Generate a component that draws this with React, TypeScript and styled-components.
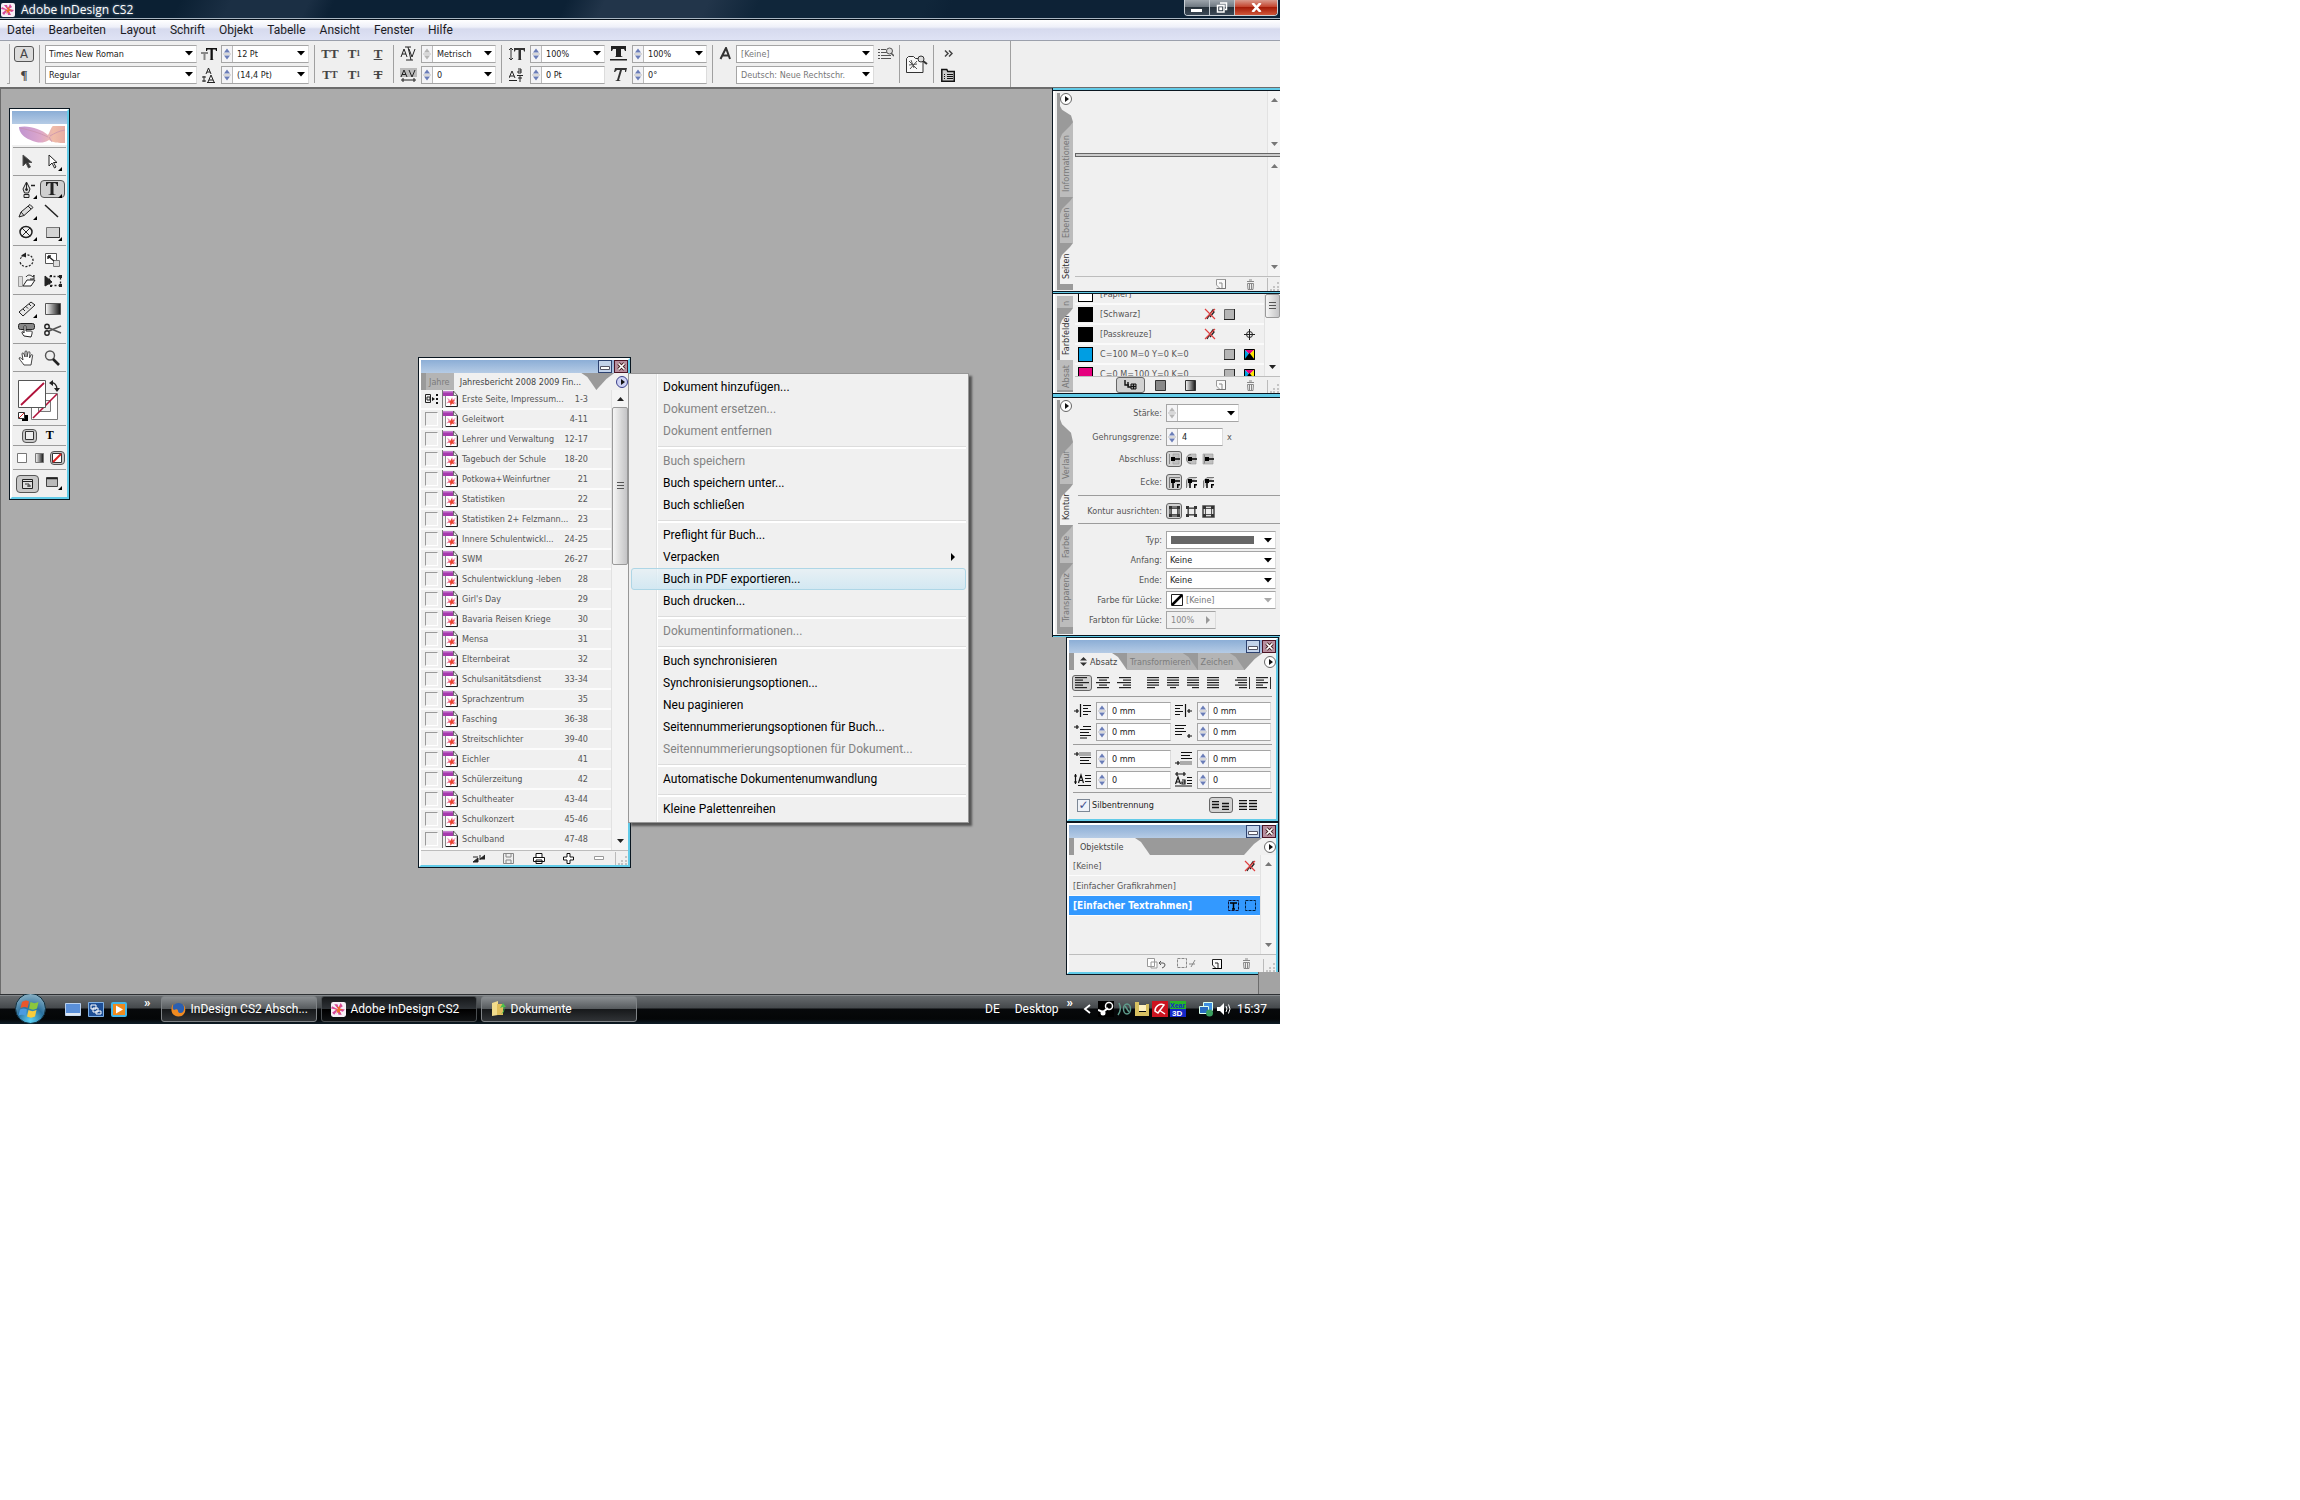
import React from 'react';
import styled, { createGlobalStyle, css } from 'styled-components';

const ui = 'Roboto, "Open Sans", sans-serif';
const small = '"DejaVu Sans Condensed", "DejaVu Sans", sans-serif';
const serif = '"Liberation Serif", serif';
const face = '#f0f0f0';
const cyan = '#62cbe8';
const rule = '#9c9c9c';

const Global = createGlobalStyle`
  * { box-sizing: border-box; }
  body { margin: 0; background: #fff; font-family: ${ui}; font-size: 12px; color: #000; }
  button, input, select { font: inherit; color: inherit; margin: 0; padding: 0; border: 0; background: none; border-radius: 0; outline: none; }
  button { display: flex; align-items: center; justify-content: center; }
  svg { display: block; flex: none; }
  ul { list-style: none; margin: 0; padding: 0; }
`;

/* ---------- shell ---------- */
const Desktop = styled.div`
  max-width: 1280px;
  display: flex;
  flex-direction: column;
  overflow: hidden;
`;

const TitleBar = styled.header`
  height: 20px;
  display: flex;
  align-items: center;
  gap: 6px;
  padding-left: 1px;
  color: #fff;
  border-bottom: 1px solid #06101a;
  box-shadow: inset 0 -1px 0 #a9b6c2;
  background: linear-gradient(115deg, #0b2033 0 14%, #1b2f44 18% 24%, #0c2135 26% 44%, #22354a 47% 55%, #10263a 59% 72%, #0d2236 74% 100%);
`;
const AppTitle = styled.h1`
  margin: 0;
  flex: 1;
  font-family: "Open Sans", sans-serif;
  font-size: 12px;
  font-weight: 400;
  line-height: 18px;
  text-shadow: 0 0 3px #7d93a8;
`;
const Caption = styled.div`
  display: flex;
  align-self: flex-start;
  height: 16px;
  margin-right: 2px;
  border: 1px solid #c9d0d6;
  border-top: 0;
  border-radius: 0 0 4px 4px;
  overflow: hidden;
`;
const CaptionButton = styled.button<{ $close?: boolean }>`
  width: ${p => (p.$close ? 42 : 25)}px;
  border-right: ${p => (p.$close ? 0 : '1px solid #c0c8ce')};
  background: ${p => (p.$close
    ? 'linear-gradient(#d99a8c, #c4452f 45%, #a51c08 50%, #d0573a)'
    : 'linear-gradient(#9da5ac, #6f7982 45%, #27323c 50%, #3c4956)')};
`;

const MenuBar = styled.nav`
  height: 21px;
  display: flex;
  align-items: center;
  gap: 14px;
  padding-left: 7px;
  border-bottom: 1px solid #9ba0ac;
  background: linear-gradient(#ffffff, #eef0f9 35%, #d6daee 45%, #dfe3f5);
`;
const MenuLink = styled.button`
  line-height: 18px;
  color: #1c1c24;
`;

/* ---------- control strip ---------- */
const ControlBar = styled.section`
  height: 48px;
  display: flex;
  align-items: center;
  gap: 4px;
  padding-left: 7px;
  background: #efefef;
  border-bottom: 2px solid #6c6c6c;
  font-family: ${small};
  font-size: 9px;
`;
const Grip = styled.div`
  width: 3px;
  height: 40px;
  border-right: 1px solid #a8a8a8;
  border-bottom: 1px solid #a8a8a8;
`;
const Divider = styled.div<{ $full?: boolean }>`
  width: 1px;
  height: ${p => (p.$full ? 46 : 38)}px;
  margin: 0 1px;
  background: #a0a0a0;
`;
const Spacer = styled.div<{ $w: number }>`
  width: ${p => p.$w}px;
`;
const Stack = styled.div<{ $w?: number }>`
  display: flex;
  flex-direction: column;
  gap: 3px;
  width: ${p => (p.$w ? `${p.$w}px` : 'auto')};
`;
const Cell = styled.div`
  height: 18px;
  display: flex;
  align-items: center;
  justify-content: center;
`;
const GlyphButton = styled.button<{ $on?: boolean }>`
  height: 18px;
  min-width: 20px;
  font-family: ${serif};
  font-weight: 700;
  font-size: 13px;
  line-height: 16px;
  color: #444;
  ${p => p.$on && css`
    height: 16px;
    margin: 1px 0;
    border: 1px solid #555;
    border-radius: 3px;
    background: #dcdcdc;
    font-family: ${small};
    font-weight: 400;
  `}
  sup, sub { font-size: 8px; line-height: 7px; }
  small { font-size: 10px; }
`;

const FieldBox = styled.div<{ $w?: number; $off?: boolean }>`
  width: ${p => (p.$w ? `${p.$w}px` : '100%')};
  height: 18px;
  display: flex;
  align-items: center;
  border: 1px solid #a5a5a5;
  border-right-color: #dcdcdc;
  background: ${p => (p.$off ? face : '#fff')};
  color: ${p => (p.$off ? '#888' : '#222')};
  font-family: ${small};
  font-size: 9px;
`;
const FieldInput = styled.input`
  flex: 1;
  min-width: 0;
  width: 100%;
  height: 16px;
  padding-left: 4px;
`;
const SelectWrap = styled.div`
  flex: 1;
  min-width: 0;
  display: grid;
  grid-template-columns: 1fr 14px;
  align-items: center;
`;
const NativeSelect = styled.select<{ $muted?: boolean; $pad?: number }>`
  appearance: none;
  grid-area: 1 / 1 / 2 / 3;
  width: 100%;
  height: 16px;
  padding-left: ${p => p.$pad ?? 3}px;
  color: ${p => (p.$muted ? '#777' : 'inherit')};
`;
const ArrowSlot = styled.span`
  grid-area: 1 / 2;
  display: flex;
  justify-content: center;
  pointer-events: none;
`;
const SpinBox = styled.button`
  width: 11px;
  height: 16px;
  background: #f4f4f6;
  border-right: 1px solid #bbb;
`;

const Down = ({ c = '#000' }: { c?: string }) => (
  <svg width="8" height="5" viewBox="0 0 8 5"><path d="M0 0h8L4 4.500z" fill={c} /></svg>
);
const Spin = ({ off, label = 'Wert ändern' }: { off?: boolean; label?: string }) => (
  <SpinBox aria-label={label}>
    <svg width="8" height="14" viewBox="0 0 8 14">
      <path d="M4 1.500L7 5.500H1zM4 12.500L7 8.500H1z" fill={off ? '#b5b5b5' : '#6a7db8'} />
      <path d="M0 7h8" stroke="#bbb" />
    </svg>
  </SpinBox>
);

type FieldProps = { label: string; value: string; w?: number; spin?: boolean; spinOff?: boolean; muted?: boolean; off?: boolean; pad?: number; lead?: React.ReactNode };
const Combo = ({ label, value, w, spin, spinOff, muted, off, pad, lead }: FieldProps) => (
  <FieldBox $w={w}>
    {spin && <Spin off={spinOff} />}
    {lead}
    <SelectWrap>
      <NativeSelect aria-label={label} $muted={muted} $pad={pad} defaultValue={value}><option>{value}</option></NativeSelect>
      <ArrowSlot><Down c={off ? '#aaa' : '#000'} /></ArrowSlot>
    </SelectWrap>
  </FieldBox>
);
const Spinner = ({ label, value, w, id }: FieldProps & { id?: string }) => (
  <FieldBox $w={w}>
    <Spin />
    <FieldInput id={id} aria-label={label} defaultValue={value} />
  </FieldBox>
);

/* ---------- workspace ---------- */
const Workspace = styled.main`
  position: relative;
  min-height: 905px;
  background: #ababab;
  border-left: 1px solid #6c6c6c;
`;
const Corner = styled.div`
  position: absolute;
  right: 0;
  bottom: 0;
  width: 22px;
  height: 22px;
  background: #a3a3a3;
  border-left: 1px solid #6c6c6c;
`;
const Floating = styled.div<{ $x: number; $y: number; $w: number }>`
  position: absolute;
  left: ${p => p.$x}px;
  top: ${p => p.$y}px;
  width: ${p => p.$w}px;
`;
const Frame = styled.section`
  border: 1px solid #0a1620;
  font-family: ${small};
  font-size: 9px;
  color: #555;
`;
const FrameInner = styled.div`
  border: 2px solid;
  border-color: #fff ${cyan} ${cyan} #fff;
  background: ${face};
`;
const PaletteTitle = styled.div`
  height: 13px;
  display: flex;
  justify-content: flex-end;
  gap: 2px;
  background: linear-gradient(#8caed6, #b5cbe5);
`;
const PaletteButton = styled.button<{ $close?: boolean }>`
  width: 14px;
  height: 13px;
  border: 1px solid ${p => (p.$close ? '#4a1525' : '#2d4270')};
  background: ${p => (p.$close ? '#b88f9f' : '#c3d3ea')};
`;
const TitleButtons = () => (
  <PaletteTitle>
    <PaletteButton aria-label="Minimieren"><svg width="10" height="9"><path d="M.5 4.500h9v3h-9z" fill="#fff" stroke="#556" /></svg></PaletteButton>
    <PaletteButton $close aria-label="Schließen"><svg width="9" height="9"><path d="M1.500 1.500l6 6M7.500 1.500l-6 6" stroke="#422" strokeWidth="3.400" /><path d="M1.500 1.500l6 6M7.500 1.500l-6 6" stroke="#fff" strokeWidth="1.700" /></svg></PaletteButton>
  </PaletteTitle>
);

/* horizontal palette tabs */
const TabStrip = styled.div`
  height: 17px;
  display: flex;
  padding-left: 5px;
  background: #9a9a9a;
`;
const Tab = styled.button<{ $active?: boolean; $flat?: boolean; $w: number }>`
  width: ${p => p.$w}px;
  height: 17px;
  justify-content: flex-start;
  gap: 3px;
  padding-left: ${p => (p.$active ? 6 : 3)}px;
  white-space: nowrap;
  overflow: hidden;
  color: ${p => (p.$active ? '#444' : '#7c7c7c')};
  background: ${p => (p.$active ? face : '#b4b4b4')};
  clip-path: ${p => (p.$flat ? 'none' : 'polygon(0 0, calc(100% - 15px) 0, calc(100% - 9px) 4px, 100% 100%, 0 100%)')};
`;
const TabEnd = styled.div`
  margin-left: auto;
  width: 32px;
  display: flex;
  align-items: center;
  justify-content: flex-end;
  background: ${face};
  clip-path: polygon(18px 0, 100% 0, 100% 100%, 0 100%, 10px 6px);
`;
const RoundButton = styled.button<{ $hot?: boolean }>`
  width: 12px;
  height: 12px;
  border: 1px solid ${p => (p.$hot ? '#3a3f8a' : '#666')};
  border-radius: 50%;
  background: ${p => (p.$hot ? '#cfd3f4' : '#fff')};
`;
const Play = () => <svg width="5" height="6"><path d="M1 0l4 3-4 3z" fill="#111" /></svg>;

/* scrollbars */
const Scroll = styled.div<{ $w?: number }>`
  width: ${p => p.$w ?? 13}px;
  flex: none;
  display: flex;
  flex-direction: column;
  align-items: center;
  justify-content: space-between;
  gap: 6px;
  padding: 7px 0;
  background: #f4f4f4;
  border-left: 1px solid #e2e2e2;
`;
const Thumb = styled.div<{ $h: number }>`
  width: 100%;
  height: ${p => p.$h}px;
  margin-bottom: auto;
  display: flex;
  align-items: center;
  justify-content: center;
  border: 1px solid #999;
  border-radius: 2px;
  background: linear-gradient(90deg, #f5f5f5, #dcdcdc 50%, #c4c4c6);
`;
const CutScroll = styled(Scroll)`
  padding-top: 0;
`;
const Arrow = ({ up, c = '#777' }: { up?: boolean; c?: string }) => (
  <svg width="7" height="4"><path d={up ? 'M0 4h7L3.500 0z' : 'M0 0h7L3.500 4z'} fill={c} /></svg>
);
const Lines = () => <svg width="7" height="8"><path d="M0 .5h7M0 3.500h7M0 6.500h7" stroke="#555" /></svg>;

const FooterBar = styled.footer<{ $h: number }>`
  height: ${p => p.$h}px;
  flex: none;
  display: flex;
  align-items: center;
  justify-content: flex-end;
  gap: 11px;
  border-top: 1px solid #bdbdbd;
`;
const FooterSlot = styled.span`
  width: 19px;
  display: flex;
  justify-content: center;
`;
const GripWrap = styled.span`
  align-self: flex-end;
  margin-left: -4px;
`;
const Footer = ({ h, children }: { h: number; children: React.ReactNode }) => (
  <FooterBar $h={h}>
    {React.Children.map(children, c => <FooterSlot>{c}</FooterSlot>)}
    <GripWrap>
      <svg width="13" height="13"><path d="M.5 0v13" stroke="#bbb" /><path d="M10 4h2v2h-2zM10 8h2v2h-2zM6 8h2v2H6zM10 11h2v2h-2zM6 11h2v2H6zM3 11h2v2H3z" fill="#c4c4c4" /></svg>
    </GripWrap>
  </FooterBar>
);
const NewPage = ({ dark }: { dark?: boolean }) => (
  <svg width="10" height="10"><path d="M.5.500h9v9H4L.5 6z" fill="#fafafa" stroke={dark ? '#222' : '#999'} /><path d="M.5 9.500h9V.5" fill="none" stroke={dark ? '#000' : '#777'} /><path d="M3 4h3v5" fill="none" stroke={dark ? '#222' : '#888'} /></svg>
);
const Trash = () => (
  <svg width="9" height="11"><path d="M1 2.500h7M3 1h3M1.500 4.500l.5 6h5l.5-6zM3.500 4.500v6M5.500 4.500v6" fill="none" stroke="#888" /></svg>
);
const PenOff = () => (
  <svg width="12" height="12"><path d="M9.500 1L6 6l-3 5M8 2l2 2-4 5" fill="none" stroke="#222" strokeWidth="1.300" /><path d="M1 1l10 10M11 1L1 11" stroke="#e04040" strokeWidth="1.200" /></svg>
);

/* ---------- toolbox ---------- */
const ToolTitle = styled.div`
  height: 13px;
  background: linear-gradient(#8caed6, #b5cbe5);
`;
const Art = styled.div`
  height: 23px;
  padding-left: 3px;
  background: linear-gradient(#fff 21px, ${face} 21px);
`;
const ToolGroup = styled.div`
  display: grid;
  grid-template-columns: 25px 25px;
  grid-auto-rows: 21px;
  justify-content: center;
  padding: 3px 0;
  margin: 0 1px;
  border-top: 1px solid ${rule};
`;
const Tool = styled.button<{ $on?: boolean }>`
  border-radius: 4px;
  ${p => p.$on && css`border: 1px solid #555; background: #cfcfcf; height: 18px; margin-top: 1px;`}
`;
const FillArea = styled.div`
  height: 54px;
  margin: 0 1px;
  padding: 7px 4px 0;
  border-top: 1px solid ${rule};
`;
const ModeRow = styled.div<{ $h: number; $pad?: number }>`
  height: ${p => p.$h}px;
  display: flex;
  align-items: center;
  justify-content: space-around;
  margin: 0 1px;
  padding: 0 ${p => p.$pad ?? 0}px;
  border-top: 1px solid ${rule};
  font: 700 12px ${serif};
  color: #000;
`;
const Mode = styled.button<{ $on?: boolean; $w?: number }>`
  width: ${p => p.$w ?? 15}px;
  height: ${p => (p.$w ? 18 : 14)}px;
  border-radius: 4px;
  ${p => p.$on && css`border: 1px solid #555; background: #c8c8c8;`}
`;
const I = ({ children }: { children: React.ReactNode }) => <svg width="22" height="18" viewBox="0 0 22 18" fill="none" stroke="#222">{children}</svg>;
const Flag = () => <path d="M21 14v4h-4z" fill="#000" stroke="none" />;

const tools: { name: string; icon: React.ReactNode; on?: boolean }[][] = [
  [
    { name: 'Auswahl', icon: <I><path d="M7 2v11l3-3 2.500 5 2-1-2.500-4.500H16z" fill="#333" stroke="#555" /></I> },
    { name: 'Direktauswahl', icon: <I><path d="M8 2v11l3-3 2.500 5 1.500-1-2.500-4.500H16z" fill="#fff" /><Flag /></I> },
  ],
  [
    { name: 'Zeichenstift', icon: <I><path d="M10.500 1L7 8l1.500 4h4L14 8zM10.500 2v6M8 13.500h5v3H8z" fill="#ddd" /><circle cx="10.500" cy="8.500" r="1" fill="#222" /><path d="M15 4.500h4" strokeWidth="1.500" /><Flag /></I> },
    { name: 'Text', on: true, icon: <I><path d="M5 2h12v4h-1c0-2-1-3-3.500-3v10c0 1 .5 1.500 2 1.500V15H7.500v-.5c1.500 0 2-.5 2-1.500V3C7 3 6 4 6 6H5z" fill="#222" stroke="none" /><Flag /></I> },
    { name: 'Buntstift', icon: <I><path d="M3 15l2-5 9-7.500 3 3L8 13.500zM5 10l3 3.500M12 4l3 3" fill="#ddd" /><Flag /></I> },
    { name: 'Linie', icon: <I><path d="M4 3l13 12" strokeWidth="1.500" /></I> },
    { name: 'Ellipsenrahmen', icon: <I><ellipse cx="10" cy="9" rx="6" ry="5.500" strokeWidth="1.500" /><path d="M6 5l8 8M14 5l-8 8" /><Flag /></I> },
    { name: 'Rechteck', icon: <I><path d="M5.500 4.500h13v10h-13z" fill="#d4d4d4" stroke="#777" /><path d="M18.500 4.500v10h-13" stroke="#333" /><Flag /></I> },
  ],
  [
    { name: 'Drehen', icon: <I><path d="M8 4.500c5-2 9 1 9 5s-4 6.500-8 6-5-4-5-5" strokeDasharray="2 1.500" strokeWidth="1.300" /><path d="M8 4.500C6 5 5 6 4.500 8" /><path d="M5 4.500l5-3v5z" fill="#222" stroke="none" /></I> },
    { name: 'Skalieren', icon: <I><path d="M4.500 2.500h11v10h-11z" fill="#fff" stroke="#555" /><path d="M12.500 9.500h6v6h-6z" fill="#ddd" stroke="#777" /><path d="M7 5l6 5M7 5v3M7 5h3" strokeWidth="1.400" /></I> },
    { name: 'Verbiegen', icon: <I><path d="M2.500 4.500h4v10h-4z" stroke="#999" fill="#ddd" /><path d="M7 14l4-6h8l-4 6z" fill="#fff" /><path d="M10 5c2-3 5-2 7 0l1-2v4h-4" /></I> },
    { name: 'Frei transformieren', icon: <I><path d="M8.500 4.500h11v9h-11z" strokeDasharray="2 2" strokeWidth="1.300" /><path d="M4 4v10l7-4z" fill="#222" /><path d="M18 3h3v3h-3zM18 12h3v3h-3zM9 3h2v2H9zM9 13h2v2H9z" fill="#222" stroke="none" /></I> },
  ],
  [
    { name: 'Messen', icon: <I><path d="M3 12L15 2l4 3L7 16z" fill="#e6e6e6" /><path d="M7 9l2 2M10 6.500l2 2M13 4l2 2" /><Flag /></I> },
    { name: 'Verlauf', icon: <I><defs><linearGradient id="toolGrad"><stop offset="0" stopColor="#fff" /><stop offset="1" stopColor="#111" /></linearGradient></defs><path d="M4.500 3.500h15v11h-15z" fill="url(#toolGrad)" stroke="#555" /></I> },
    { name: 'Schaltfläche', icon: <I><rect x="2.500" y="2.500" width="16" height="6" rx="2" fill="#888" /><path d="M8 15c-4-5-1-5 0-3V6c0-2 2-2 2 0v4h5c2 0 1 3 0 6z" fill="#fff" /></I> },
    { name: 'Schere', icon: <I><path d="M20 5L8 10M20 12L8 7" strokeWidth="1.600" stroke="#555" /><circle cx="6" cy="5.500" r="2.200" strokeWidth="1.400" /><circle cx="6" cy="12" r="2.200" strokeWidth="1.400" /></I> },
  ],
  [
    { name: 'Hand', icon: <I><path d="M8 16C6 13 3 10 3 9c1-1 2 0 4 2L6 5c0-1.500 1.500-1.500 2 0l1 3V3c0-1.500 2-1.500 2 0v5l1-4.500c.5-1.300 2-1 2 .5L13.500 9 15 6c1-1 2 0 1.500 1L15 16z" fill="#fff" stroke="#444" /></I> },
    { name: 'Zoom', icon: <I><circle cx="9" cy="6.500" r="4.500" fill="#eee" strokeWidth="1.400" stroke="#555" /><path d="M12 10l6 6" strokeWidth="2.600" /></I> },
  ],
];

const Toolbox = () => (
  <Floating $x={8} $y={19} $w={61}>
    <Frame>
      <FrameInner>
        <ToolTitle />
        <Art>
          <svg width="50" height="21" viewBox="0 0 50 21">
            <defs>
              <linearGradient id="wing"><stop offset="0" stopColor="#c095d0" /><stop offset=".45" stopColor="#dba6cc" /><stop offset=".75" stopColor="#f0bca8" /><stop offset="1" stopColor="#e6aca4" /></linearGradient>
            </defs>
            <path d="M4 3C14 1 26 5 33 11c2-3 3-8 5-9h12v17c-6 0-11 0-16-3-5 3-9 3-13 2-4-1-5-2-8-3C7 12 4 7 4 3z" fill="url(#wing)" />
            <path d="M5 4c10 2 20 5 28 9M34 13c1 2 2 3 3 5M35 12c5-3 9-5 15-6" stroke="#c78fae" strokeWidth=".7" fill="none" />
          </svg>
        </Art>
        {tools.map((group, i) => (
          <ToolGroup key={i}>
            {group.map(t => <Tool key={t.name} $on={t.on} aria-label={t.name}>{t.icon}</Tool>)}
          </ToolGroup>
        ))}
        <FillArea>
          <svg width="44" height="43" viewBox="0 0 44 43" fill="none">
            <path d="M14.500 14.500h26v26h-26z" fill="#fff" stroke="#777" />
            <path d="M21.500 21.500h12v11h-12z" fill={face} stroke="#777" />
            <path d="M16 39l24-24" stroke="#b0123a" strokeWidth="1.600" />
            <path d="M1.500 1.500h27v27h-27z" fill="#fff" stroke="#555" />
            <path d="M4 26L27 4" stroke="#b0123a" strokeWidth="1.800" />
            <path d="M34 4c3-1 6 2 6 6" stroke="#222" strokeWidth="1.400" /><path d="M32 4l4-3v6zM37 9h6l-3 4z" fill="#222" />
            <path d="M5 36h6v6H5z" fill="#000" /><path d="M1.500 33.500h6v6h-6z" fill="#fff" stroke="#333" /><path d="M2 39l5-5" stroke="#c22" />
          </svg>
        </FillArea>
        <ModeRow $h={20} $pad={6}>
          <Mode $on aria-label="Container"><svg width="9" height="9"><path d="M.5.500h8v8h-8z" fill="#eee" stroke="#333" /></svg></Mode>
          <Mode aria-label="Text formatieren">T</Mode>
        </ModeRow>
        <ModeRow $h={24}>
          <Mode aria-label="Farbe"><svg width="10" height="10"><path d="M.5.500h9v9h-9z" fill="#fff" stroke="#777" /></svg></Mode>
          <Mode aria-label="Verlauf anwenden"><svg width="9" height="10"><path d="M.5.500h8v9h-8z" fill="url(#toolGrad)" stroke="#777" /></svg></Mode>
          <Mode $on aria-label="Keine"><svg width="10" height="10"><path d="M.5.500h9v9h-9z" fill="#fff" stroke="#333" /><path d="M1 9l8-8" stroke="#d22" strokeWidth="2" /></svg></Mode>
        </ModeRow>
        <ModeRow $h={28}>
          <Mode $on $w={23} aria-label="Normalmodus"><svg width="11" height="10"><path d="M.5.500h10v9H.5zM.5 2.500h10" fill="#ddd" stroke="#222" /><path d="M3 5h4v3M5 7h4" stroke="#333" fill="none" /></svg></Mode>
          <Mode $w={20} aria-label="Vorschau"><svg width="16" height="13"><path d="M.5.500h11v9H.5z" fill="#bbb" stroke="#444" /><path d="M.5 1.500h11" stroke="#222" strokeWidth="1.500" /><path d="M16 9v4h-4z" /></svg></Mode>
        </ModeRow>
      </FrameInner>
    </Frame>
  </Floating>
);

/* ---------- book palette ---------- */
const chapters: [string, string][] = [
  ['Erste Seite, Impressum...', '1-3'], ['Geleitwort', '4-11'], ['Lehrer und Verwaltung', '12-17'], ['Tagebuch der Schule', '18-20'],
  ['Potkowa+Weinfurtner', '21'], ['Statistiken', '22'], ['Statistiken 2+ Felzmann...', '23'], ['Innere Schulentwickl...', '24-25'],
  ['SWM', '26-27'], ['Schulentwicklung -leben', '28'], ["Girl's Day", '29'], ['Bavaria Reisen Kriege', '30'], ['Mensa', '31'],
  ['Elternbeirat', '32'], ['Schulsanitätsdienst', '33-34'], ['Sprachzentrum', '35'], ['Fasching', '36-38'], ['Streitschlichter', '39-40'],
  ['Eichler', '41'], ['Schülerzeitung', '42'], ['Schultheater', '43-44'], ['Schulkonzert', '45-46'], ['Schulband', '47-48'],
];
const BookBody = styled.div`
  display: flex;
`;
const BookList = styled.ul`
  flex: 1;
`;
const BookRow = styled.li`
  height: 20px;
  display: flex;
  align-items: center;
  padding-right: 23px;
  border-bottom: 2px solid #fcfcfc;
`;
const SyncCell = styled.div`
  width: 22px;
  align-self: stretch;
  display: flex;
  align-items: center;
  justify-content: center;
  border-right: 1px solid #777;
`;
const SyncBox = styled.button`
  width: 13px;
  height: 14px;
  border: 1px solid #fff;
  border-top-color: #9a9a9a;
  border-left-color: #9a9a9a;
`;
const BookName = styled.span`
  flex: 1;
  padding-left: 4px;
  white-space: nowrap;
`;
const DocIcon = () => (
  <svg width="15" height="16" viewBox="0 0 15 16">
    <path d="M2.500 1.500h8.500l3 3v11H2.500z" fill="#fff" stroke="#888" /><path d="M14.500 5v10.500H3" fill="none" stroke="#222" />
    <path d="M0 0h10.500v5H0z" fill="#a63aad" /><path d="M0 0h10.500v1.500H0z" fill="#c77fd0" /><path d="M10.500 0l4 4.500h-4z" fill="#eee" stroke="#444" strokeWidth=".7" />
    <path d="M8.500 10L4 6.500 5.500 10 3 12.500l4-1 .5 3.500L9.500 12l4 1-2.500-3 2-3.500L10 8.500 9 6z" fill="#f08fb4" /><path d="M8.500 7l.7 2.500 2.800-.5-2 2 1.500 2.500-2.500-1-1.500 2-.3-2.700L5 11l2.500-1z" fill="#e8452c" />
  </svg>
);
const ContextMenu = styled.ul`
  position: absolute;
  left: 210px;
  top: 16px;
  width: 341px;
  padding: 2px;
  border: 1px solid #979797;
  background: linear-gradient(90deg, ${face} 27px, #e2e3e3 27px 28px, #fff 28px 29px, ${face} 29px);
  box-shadow: 3px 3px 2px #555;
  font-family: ${ui};
  font-size: 12px;
  color: #000;
`;
const MenuEntry = styled.button<{ $hot?: boolean }>`
  width: 100%;
  height: 22px;
  justify-content: space-between;
  padding: 0 9px 0 31px;
  border: 1px solid transparent;
  border-radius: 3px;
  white-space: nowrap;
  &:disabled { color: #838383; }
  ${p => p.$hot && css`border-color: #aed6e6; background: linear-gradient(rgba(226, 240, 247, .6), #d3e8f2);`}
`;
const Separator = styled.li`
  height: 8px;
  margin-left: 27px;
  padding-top: 4px;
  &::after { content: ''; display: block; height: 2px; background: #fff; border-top: 1px solid #dcdcdc; }
`;
type Entry = { t: string; off?: boolean; hot?: boolean; sub?: boolean } | null;
const entries: Entry[] = [
  { t: 'Dokument hinzufügen...' }, { t: 'Dokument ersetzen...', off: true }, { t: 'Dokument entfernen', off: true }, null,
  { t: 'Buch speichern', off: true }, { t: 'Buch speichern unter...' }, { t: 'Buch schließen' }, null,
  { t: 'Preflight für Buch...' }, { t: 'Verpacken', sub: true }, { t: 'Buch in PDF exportieren...', hot: true }, { t: 'Buch drucken...' }, null,
  { t: 'Dokumentinformationen...', off: true }, null,
  { t: 'Buch synchronisieren' }, { t: 'Synchronisierungsoptionen...' }, { t: 'Neu paginieren' }, { t: 'Seitennummerierungsoptionen für Buch...' },
  { t: 'Seitennummerierungsoptionen für Dokument...', off: true }, null,
  { t: 'Automatische Dokumentenumwandlung' }, null,
  { t: 'Kleine Palettenreihen' },
];

const BookPalette = () => (
  <Floating $x={417} $y={268} $w={213}>
    <Frame>
      <FrameInner>
        <TitleButtons />
        <TabStrip>
          <Tab $flat $w={28}>Jahre</Tab>
          <Tab $active $w={144}>Jahresbericht 2008 2009 Fin...</Tab>
          <TabEnd><RoundButton $hot aria-label="Palettenmenü"><Play /></RoundButton></TabEnd>
        </TabStrip>
        <BookBody>
          <BookList>
            {chapters.map(([name, pages], i) => (
              <BookRow key={name}>
                <SyncCell>
                  {i === 0
                    ? <svg width="14" height="12"><path d="M.5 1.500h5v8h-5zM2 4h3v3H2z" fill="none" stroke="#222" /><path d="M7 4l3 2-3 2zM11 1h2v2h-2zM11 5h2v2h-2zM11 9h2v2h-2z" fill="#111" /></svg>
                    : <SyncBox aria-label={`Formatquelle ${name}`} />}
                </SyncCell>
                <DocIcon />
                <BookName>{name}</BookName>
                <span>{pages}</span>
              </BookRow>
            ))}
          </BookList>
          <Scroll $w={17}>
            <Arrow up c="#222" />
            <Thumb $h={158}><Lines /></Thumb>
            <Arrow c="#222" />
          </Scroll>
        </BookBody>
        <Footer h={15}>
          <svg width="12" height="9"><path d="M0 8l5-4v4zM7 5l5-4v4zM0 3h5M7 1v5" fill="#222" stroke="#222" /></svg>
          <svg width="11" height="11"><path d="M.5.500h10v10H.5zM3 1v3h5V1M3 10V7h5v3" fill="#eee" stroke="#888" /></svg>
          <svg width="12" height="11"><path d="M3 4V.500h6V4M.5 4.500h11v4H.5zM3 7h6v3.500H3z" fill="#fff" stroke="#111" /></svg>
          <svg width="11" height="11"><path d="M4 .5h3V4h3.500v3H7v3.500H4V7H.5V4H4z" fill="#fff" stroke="#111" /></svg>
          <svg width="10" height="4"><path d="M.5.500h9v3h-9z" fill="#fff" stroke="#999" /></svg>
        </Footer>
      </FrameInner>
    </Frame>
    <ContextMenu>
      {entries.map((e, i) => e
        ? <li key={i}><MenuEntry $hot={e.hot} disabled={e.off}>{e.t}{e.sub && <svg width="5" height="8"><path d="M0 0l4 4-4 4z" /></svg>}</MenuEntry></li>
        : <Separator key={i} />)}
    </ContextMenu>
  </Floating>
);

/* ---------- right dock ---------- */
const Dock = styled.aside`
  position: absolute;
  right: 0;
  top: -1px;
  width: 228px;
  display: flex;
  flex-direction: column;
  font-family: ${small};
  font-size: 9px;
  color: #555;
`;
const DockPanel = styled.section<{ $h: number; $flush?: boolean }>`
  height: ${p => p.$h}px;
  padding: ${p => (p.$flush ? 0 : 2)}px 0 1px;
  background: ${cyan};
  border-left: 1px solid #0a1620;
`;
const DockInner = styled.div`
  height: 100%;
  display: flex;
  border: solid #0a1620;
  border-width: 1px 0;
  background: ${face};
  box-shadow: inset 2px 0 0 #fff;
`;
const SideTabs = styled.div`
  width: 16px;
  flex: none;
  display: flex;
  flex-direction: column;
  margin: 2px 2px 1px 4px;
  background: #9a9a9a;
  overflow: hidden;
`;
const SideHead = styled.div<{ $h: number }>`
  height: ${p => p.$h}px;
  flex: none;
  padding: 0 0 0 3px;
  background: ${face};
  clip-path: polygon(3px 0, 100% 0, 100% 100%, 14px 78%, 5px 58%, 3px 45%);
`;
const SideTab = styled.button<{ $active?: boolean; $h: number; $flat?: boolean }>`
  height: ${p => p.$h}px;
  flex: none;
  writing-mode: vertical-rl;
  transform: rotate(180deg);
  justify-content: flex-start;
  padding: ${p => (p.$flat ? 2 : 5)}px 2px 0 0;
  overflow: hidden;
  white-space: nowrap;
  color: ${p => (p.$active ? '#333' : '#777')};
  background: ${p => (p.$active ? face : '#bcbcbc')};
  clip-path: ${p => (p.$flat ? 'none' : 'polygon(0 0, 13px 0, 13px calc(100% - 17px), 11px calc(100% - 12px), 3px calc(100% - 4px), 0 100%)')};
`;
const Column = styled.div`
  flex: 1;
  min-width: 0;
  display: flex;
  flex-direction: column;
`;
const PageArea = styled.div<{ $h?: number }>`
  height: ${p => (p.$h ? `${p.$h}px` : 'auto')};
  flex: ${p => (p.$h ? 'none' : 1)};
  display: flex;
  justify-content: flex-end;
`;
const Splitter = styled.div`
  height: 4px;
  border: 1px solid #666;
  border-width: 1px 0 1px 1px;
  background: #ccc;
`;
const SwatchArea = styled.div`
  flex: 1;
  min-height: 0;
  display: flex;
`;
const SwatchList = styled.ul`
  flex: 1;
  display: flex;
  flex-direction: column;
  justify-content: center;
  overflow: hidden;
`;
const Swatch = styled.li`
  height: 20px;
  flex: none;
  display: flex;
  align-items: center;
  gap: 7px;
  padding: 0 8px 0 3px;
  border-bottom: 2px solid #fafafa;
`;
const Chip = styled.span<{ $c: string }>`
  width: 15px;
  height: 15px;
  border: 1px solid #000;
  background: ${p => p.$c};
`;
const Grow = styled.span`
  flex: 1;
  white-space: nowrap;
`;
const Slot = styled.span`
  width: 13px;
  display: flex;
  justify-content: center;
`;
const GrayIcon = () => <svg width="11" height="11"><path d="M.5.500h10v10H.5z" fill="#b5b5b5" stroke="#666" /><path d="M10.500 0v10.500H0" stroke="#222" fill="none" /></svg>;
const CmykIcon = () => <svg width="11" height="11"><path d="M0 0h11L5.500 5.500z" fill="#e5007e" /><path d="M0 0l5.500 5.500L0 11z" fill="#00a0e0" /><path d="M11 0v11L5.500 5.500z" fill="#ffe600" /><path d="M0 11h11L5.500 4z" /><path d="M.5.500h10v10H.5z" fill="none" stroke="#000" /></svg>;
const TargetIcon = () => <svg width="11" height="11"><circle cx="5.500" cy="5.500" r="3" fill="none" stroke="#222" /><path d="M5.500 0v11M0 5.500h11" stroke="#222" /></svg>;

const swatches: { c: string; t: string; pen?: boolean; kind: React.ReactNode; mode: React.ReactNode }[] = [
  { c: '#fff', t: '[Papier]', kind: null, mode: null },
  { c: '#000', t: '[Schwarz]', pen: true, kind: <GrayIcon />, mode: null },
  { c: '#000', t: '[Passkreuze]', pen: true, kind: null, mode: <TargetIcon /> },
  { c: '#009ee3', t: 'C=100 M=0 Y=0 K=0', kind: <GrayIcon />, mode: <CmykIcon /> },
  { c: '#e5007e', t: 'C=0 M=100 Y=0 K=0', kind: <GrayIcon />, mode: <CmykIcon /> },
];

const StrokeForm = styled.div`
  flex: 1;
  display: flex;
  flex-direction: column;
  padding: 3px 4px 0 3px;
`;
const FormRow = styled.div<{ $h: number; $top?: number }>`
  height: ${p => p.$h}px;
  padding-top: ${p => p.$top ?? 0}px;
  display: grid;
  grid-template-columns: 84px auto 1fr;
  align-items: center;
  column-gap: 4px;
`;
const FormLabel = styled.label`
  text-align: right;
  white-space: nowrap;
`;
const Rule = styled.hr`
  width: 100%;
  height: 1px;
  margin: 0;
  border: 0;
  flex: none;
  background: ${rule};
`;
const Group = styled.div<{ $gap?: number }>`
  display: flex;
  align-items: center;
  gap: ${p => p.$gap ?? 1}px;
`;
const Toggle = styled.button<{ $on?: boolean; $w?: number }>`
  width: ${p => p.$w ?? 17}px;
  height: 16px;
  flex: none;
  border-radius: 3px;
  ${p => p.$on && css`border: 1px solid #666; background: #d2d2d2;`}
`;
const StrokeToggle = styled(Toggle)`
  width: 16px;
`;
const TypeBar = styled.span`
  flex: 1;
  height: 8px;
  margin-left: 4px;
  background: #666;
`;
const TypeField = styled(FieldBox)`
  padding-right: 3px;
  gap: 10px;
`;
const cap = ['M1.500 1v10', 'M6 1.500C0 2 0 10 6 10.500', 'M2.500 1.500v9'];
const CapIcon = ({ n }: { n: number }) => <svg width="12" height="12"><path d={n === 1 ? 'M11 1H6C0 1 0 11 6 11h5z' : n === 0 ? 'M5 1h6v10H5z' : 'M1 1h10v10H1z'} fill="#c0c0c0" stroke="#999" strokeWidth=".6" /><path d={cap[n]} fill="none" stroke="#888" /><path d="M4 6h8" stroke="#000" strokeWidth="1.500" /><path d="M3 4h4v4H3z" /></svg>;
const join = ['M1.500 12V1.500H12', 'M1.500 12V6q0-4.500 4.500-4.500h6', 'M1.500 12V5L5 1.500h7'];
const JoinIcon = ({ n }: { n: number }) => <svg width="12" height="12"><path d={join[n]} fill="#ccc" stroke="#777" /><path d="M5 12V5h7" fill="none" stroke="#000" strokeWidth="1.500" /><path d="M3 3h4v4H3zM9 8h3v1.500h-1.500V12H9z" /></svg>;
const AlignStroke = ({ n }: { n: number }) => <svg width="13" height="13"><path d={['M2 2h9v9H2z', 'M3 3h7v7H3z', 'M1 1h11v11H1z'][n]} fill="#ddd" stroke={n === 2 ? '#444' : '#777'} strokeWidth={n === 0 ? 2 : 1.500} /><path d="M3.500 3.500h6v6h-6z" fill="#eee" stroke="#555" /><path d="M1 1h3v3H1zM9 1h3v3H9zM9 9h3v3H9zM1 9h3v3H1z" fill="#333" /></svg>;

/* paragraph palette */
const DockFrame = styled(Frame)`
  width: 213px;
  margin-right: 1px;
  align-self: flex-end;
`;
const ParaButtons = styled.div`
  height: 26px;
  display: flex;
  align-items: center;
  justify-content: space-between;
  margin: 0 4px 0 3px;
`;
const ParaGrid = styled.div`
  display: grid;
  grid-template-columns: 18px 75px 18px 74px;
  column-gap: 4px;
  grid-auto-rows: 21px;
  align-items: center;
  padding: 3px 5px 2px;
`;
const Inset = styled.div`
  padding: 0 4px;
`;
const CheckRow = styled.div`
  height: 26px;
  display: flex;
  align-items: center;
  gap: 6px;
  padding: 0 19px 2px 8px;
`;
const CheckLabel = styled.label`
  flex: 1;
  display: flex;
  align-items: center;
  gap: 2px;
  color: #222;
`;
const Check = styled.input`
  appearance: none;
  width: 13px;
  height: 13px;
  border: 1px solid #7d8896;
  background: #eef2f8;
  display: grid;
  place-items: center;
  &:checked::after { content: '✓'; font: 700 12px/11px "DejaVu Sans", sans-serif; color: #3f4f8f; }
`;
const bars: Record<string, number[][]> = {
  left: [[0, 12], [0, 8], [0, 14], [0, 8], [0, 12]],
  center: [[1, 12], [3, 8], [0, 14], [3, 8], [1, 12]],
  right: [[2, 12], [6, 8], [0, 14], [6, 8], [2, 12]],
  jl: [[0, 12], [0, 12], [0, 12], [0, 12], [0, 8]],
  jc: [[0, 12], [0, 12], [0, 12], [0, 12], [3, 6]],
  jr: [[0, 12], [0, 12], [0, 12], [0, 12], [5, 7]],
  ja: [[0, 12], [0, 12], [0, 12], [0, 12], [0, 12]],
  sl: [[2, 10], [0, 12], [3, 9], [0, 12], [4, 8]],
  sr: [[0, 12], [0, 8], [0, 12], [0, 7], [0, 11]],
};
const Bars = ({ k }: { k: string }) => (
  <svg width="15" height="12">
    {bars[k].map(([x, w], i) => <rect key={i} x={x} y={i * 2.500} width={w} height="1.200" fill="#222" />)}
    {k[0] === 's' && <rect x="14" y="0" width="1" height="12" fill="#333" />}
  </svg>
);
const ParaIcon = ({ k }: { k: number }) => (
  <svg width="17" height="15" stroke="#111" strokeWidth="1.200" fill="none">
    {[
      <path key="0" d="M0 8h5M3 6v4M6.500 1v13M9 2.500h8M9 5.500h5M9 8.500h8M9 11.500h5" />,
      <path key="1" d="M12 8h5M14 6v4M10.500 1v13M0 2.500h8M0 5.500h5M0 8.500h8M0 11.500h5" />,
      <path key="2" d="M0 3h5M3 1v4M9 2.500h8M6 5.500h11M6 8.500h9M6 11.500h11M6 14h7" />,
      <path key="3" d="M12 12h5M14 10v4M0 1.500h11M0 4.500h9M0 7.500h11M0 10.500h7" />,
      <g key="4"><path d="M5 1h12v4H5z" fill="#aaa" stroke="none" /><path d="M0 3h5M3 1v4M6 6.500h11M6 9.500h9M6 12.500h11" /></g>,
      <g key="5"><path d="M5 10h12v4H5z" fill="#aaa" stroke="none" /><path d="M0 12h5M3 10v4M6 1.500h11M6 4.500h9M6 7.500h11" /></g>,
      <path key="6" d="M1.500 2v10M0 4h3M0 10h3M4.500 11L7 3l2.500 8M5 8.500h4M11 3.500h6M11 6.500h6M11 9.500h6M4 13.500h13" />,
      <path key="7" d="M0 2h11M2 0v4M9 0v4M.5 12L3 5l2.500 7M1 10h4M7 8h3v4H7v-2h3M12 5.500h5M12 8.500h5M12 11.500h5M0 14h17" />,
    ][k]}
  </svg>
);
const paraFields = [
  ['Einzug links', '0 mm'], ['Einzug rechts', '0 mm'], ['Einzug erste Zeile', '0 mm'], ['Einzug letzte Zeile', '0 mm'],
  ['Abstand davor', '0 mm'], ['Abstand danach', '0 mm'], ['Initialhöhe', '0'], ['Initialzeichen', '0'],
];
const paraRows = (from: number) => paraFields.slice(from, from + 4).map(([label, value], i) => (
  <React.Fragment key={label}><ParaIcon k={from + i} /><Spinner label={label} value={value} /></React.Fragment>
));

/* object styles */
const StyleArea = styled.div`
  height: 99px;
  display: flex;
`;
const StyleList = styled.ul`
  flex: 1;
  padding-top: 1px;
`;
const StyleRow = styled.li<{ $on?: boolean }>`
  height: 20px;
  display: flex;
  align-items: center;
  gap: 6px;
  padding: 0 4px;
  border-bottom: 1px solid #fcfcfc;
  ${p => p.$on && css`background: #3399ff; color: #fff; font-weight: 700; font-size: 10px;`}
`;

const RightDock = () => (
  <Dock>
    <DockPanel $h={205}>
      <DockInner>
        <SideTabs>
          <SideHead $h={29}><RoundButton aria-label="Menü Seiten"><Play /></RoundButton></SideHead>
          <SideTab $h={75}>Informationen</SideTab>
          <SideTab $h={46}>Ebenen</SideTab>
          <SideTab $h={41} $active>Seiten</SideTab>
        </SideTabs>
        <Column>
          <PageArea $h={62}><Scroll><Arrow up /><Arrow /></Scroll></PageArea>
          <Splitter />
          <PageArea><Scroll><Arrow up /><Arrow /></Scroll></PageArea>
          <Footer h={15}><NewPage /><Trash /></Footer>
        </Column>
      </DockInner>
    </DockPanel>
    <DockPanel $h={102} $flush>
      <DockInner>
        <SideTabs>
          <SideTab $h={12} $flat>n</SideTab>
          <SideTab $h={52} $active>Farbfelder</SideTab>
          <SideTab $h={30} $flat>Absat</SideTab>
        </SideTabs>
        <Column>
          <SwatchArea>
            <SwatchList>
              {swatches.map(s => (
                <Swatch key={s.t + s.c}>
                  <Chip $c={s.c} /><Grow>{s.t}</Grow>
                  <Slot>{s.pen && <PenOff />}</Slot><Slot>{s.kind}</Slot><Slot>{s.mode}</Slot>
                </Swatch>
              ))}
            </SwatchList>
            <CutScroll $w={16}><Thumb $h={24}><Lines /></Thumb><Arrow c="#222" /></CutScroll>
          </SwatchArea>
          <Footer h={17}>
            <Toggle $on $w={29} aria-label="Alle Farbfelder"><svg width="13" height="10"><path d="M1 0v5h4M4 2v5h4" fill="none" stroke="#111" strokeWidth="1.400" /><path d="M7 4h5v5H7zM9.500 4v5M7 6.500h5" fill="#999" stroke="#111" /></svg></Toggle>
            <svg width="11" height="11"><path d="M.5.500h10v10H.5z" fill="#888" stroke="#333" /></svg>
            <svg width="11" height="11"><path d="M.5.500h10v10H.5z" fill="url(#toolGrad)" stroke="#333" /></svg>
            <NewPage /><Trash />
          </Footer>
        </Column>
      </DockInner>
    </DockPanel>
    <DockPanel $h={242}>
      <DockInner>
        <SideTabs>
          <SideHead $h={42}><RoundButton aria-label="Menü Kontur"><Play /></RoundButton></SideHead>
          <SideTab $h={42}>Verlauf</SideTab>
          <SideTab $h={41} $active>Kontur</SideTab>
          <SideTab $h={38}>Farbe</SideTab>
          <SideTab $h={64}>Transparenz</SideTab>
        </SideTabs>
        <StrokeForm>
          <FormRow $h={24}><FormLabel>Stärke:</FormLabel><Combo label="Stärke" value="" w={73} spin spinOff /></FormRow>
          <FormRow $h={24}><FormLabel htmlFor="miter">Gehrungsgrenze:</FormLabel><Spinner id="miter" label="Gehrungsgrenze" value="4" w={57} /><span>x</span></FormRow>
          <FormRow $h={20}><FormLabel as="span">Abschluss:</FormLabel><Group>{[0, 1, 2].map(n => <StrokeToggle key={n} $on={n === 0} aria-label={`Abschluss ${n + 1}`}><CapIcon n={n} /></StrokeToggle>)}</Group></FormRow>
          <FormRow $h={26}><FormLabel as="span">Ecke:</FormLabel><Group>{[0, 1, 2].map(n => <StrokeToggle key={n} $on={n === 0} aria-label={`Ecke ${n + 1}`}><JoinIcon n={n} /></StrokeToggle>)}</Group></FormRow>
          <Rule />
          <FormRow $h={27} $top={3}><FormLabel as="span">Kontur ausrichten:</FormLabel><Group>{[0, 1, 2].map(n => <StrokeToggle key={n} $on={n === 0} aria-label={`Ausrichtung ${n + 1}`}><AlignStroke n={n} /></StrokeToggle>)}</Group></FormRow>
          <Rule />
          <FormRow $h={26} $top={6}><FormLabel as="span">Typ:</FormLabel><TypeField $w={110}><TypeBar /><Down /></TypeField></FormRow>
          <FormRow $h={20}><FormLabel>Anfang:</FormLabel><Combo label="Anfang" value="Keine" w={110} /></FormRow>
          <FormRow $h={20}><FormLabel>Ende:</FormLabel><Combo label="Ende" value="Keine" w={110} /></FormRow>
          <FormRow $h={20}><FormLabel>Farbe für Lücke:</FormLabel><Combo label="Farbe für Lücke" value="[Keine]" w={110} muted off lead={<svg width="16" height="12"><path d="M4.500.5h11v11h-11z" fill="#fff" stroke="#222" /><path d="M5 11L15 1" stroke="#000" strokeWidth="2.500" /></svg>} /></FormRow>
          <FormRow $h={20}><FormLabel htmlFor="gapTint">Farbton für Lücke:</FormLabel><FieldBox $w={50} $off><FieldInput id="gapTint" defaultValue="100%" /><svg width="9" height="8"><path d="M0 0l4 4-4 4z" fill="#999" /></svg></FieldBox></FormRow>
        </StrokeForm>
      </DockInner>
    </DockPanel>
    <DockFrame>
      <FrameInner>
        <TitleButtons />
        <TabStrip>
          <Tab $active $w={54}><svg width="7" height="9"><path d="M3.500 0L7 3.500H0zM3.500 9L7 5.500H0z" fill="#333" /></svg>Absatz</Tab>
          <Tab $w={72}>Transformieren</Tab>
          <Tab $w={48}>Zeichen</Tab>
          <TabEnd><RoundButton aria-label="Menü Absatz"><Play /></RoundButton></TabEnd>
        </TabStrip>
        <ParaButtons>
          <Group>
            <Toggle $on $w={20} aria-label="Linksbündig"><Bars k="left" /></Toggle>
            <Toggle $w={20} aria-label="Zentriert"><Bars k="center" /></Toggle>
            <Toggle $w={20} aria-label="Rechtsbündig"><Bars k="right" /></Toggle>
          </Group>
          <Group $gap={3}>{['jl', 'jc', 'jr', 'ja'].map(k => <Toggle key={k} aria-label={k}><Bars k={k} /></Toggle>)}</Group>
          <Group $gap={4}>{['sl', 'sr'].map(k => <Toggle key={k} aria-label={k}><Bars k={k} /></Toggle>)}</Group>
        </ParaButtons>
        <Inset><Rule /></Inset>
        <ParaGrid>{paraRows(0)}</ParaGrid>
        <Inset><Rule /></Inset>
        <ParaGrid>{paraRows(4)}</ParaGrid>
        <Inset><Rule /></Inset>
        <CheckRow>
          <CheckLabel><Check type="checkbox" defaultChecked />Silbentrennung</CheckLabel>
          <Toggle $on $w={24} aria-label="Nicht am Grundlinienraster"><svg width="18" height="9"><path d="M0 .5h7M0 3.500h7M0 6.500h7M10 2.500h7M10 5.500h7M10 8.500h7" stroke="#111" strokeWidth="1.500" /></svg></Toggle>
          <svg width="18" height="10"><path d="M0 .5h8M0 3.500h8M0 6.500h8M0 9.500h8M10 .5h8M10 3.500h8M10 6.500h8M10 9.500h8" stroke="#111" strokeWidth="1.500" /></svg>
        </CheckRow>
      </FrameInner>
    </DockFrame>
    <DockFrame>
      <FrameInner>
        <TitleButtons />
        <TabStrip>
          <Tab $active $w={76}>Objektstile</Tab>
          <TabEnd><RoundButton aria-label="Menü Objektstile"><Play /></RoundButton></TabEnd>
        </TabStrip>
        <StyleArea>
          <StyleList>
            <StyleRow><Grow>[Keine]</Grow><PenOff /></StyleRow>
            <StyleRow><Grow>[Einfacher Grafikrahmen]</Grow></StyleRow>
            <StyleRow $on>
              <Grow>[Einfacher Textrahmen]</Grow>
              <svg width="11" height="11"><path d="M.5.500h10v10H.5z" fill="none" stroke="#113" strokeDasharray="3 1" /><path d="M2 3h7M5.500 3v6M4 9h3" stroke="#000" strokeWidth="1.500" /></svg>
              <svg width="11" height="11"><path d="M.5.500h10v10H.5z" fill="none" stroke="#024" strokeDasharray="3 1" /></svg>
            </StyleRow>
          </StyleList>
          <Scroll $w={16}><Arrow up /><Arrow /></Scroll>
        </StyleArea>
        <Footer h={18}>
          <svg width="19" height="11"><path d="M.5.500h7v8h-7zM4 4h6v6H4z" fill="#fff" stroke="#999" /><path d="M12 5h4q2 0 2 2t-3 3M14 3l-2 2 2 2" fill="none" stroke="#555" /></svg>
          <svg width="19" height="11"><path d="M.5.500h9v9h-9z" fill="none" stroke="#888" strokeDasharray="3 1" /><path d="M12 6h6M14 9l4-7" stroke="#888" /></svg>
          <NewPage dark /><Trash />
        </Footer>
      </FrameInner>
    </DockFrame>
  </Dock>
);

/* ---------- taskbar ---------- */
const Taskbar = styled.footer`
  height: 30px;
  display: flex;
  align-items: center;
  padding-left: 14px;
  color: #fff;
  background: linear-gradient(#2e3134 0 1px, #85898c 1px 2px, #676b6e 2px, #44484b 14px, #07090b 15px, #040607 25px, #0d1c26);
`;
const Start = styled.button`
  width: 33px;
  height: 30px;
`;
const Quick = styled.div`
  display: flex;
  align-items: center;
  gap: 7px;
  margin-left: 18px;
`;
const Chevron = styled.button`
  align-self: flex-start;
  height: 18px;
  font-weight: 700;
  font-size: 13px;
  line-height: 16px;
`;
const Tasks = styled.div`
  flex: 1;
  display: flex;
  gap: 4px;
  margin-left: 10px;
`;
const Task = styled.button<{ $on?: boolean }>`
  width: 156px;
  height: 26px;
  justify-content: flex-start;
  gap: 5px;
  padding-left: 9px;
  border: 1px solid ${p => (p.$on ? '#4a4e51' : '#7f8386')};
  border-radius: 3px;
  white-space: nowrap;
  background: ${p => (p.$on ? 'linear-gradient(#16181a, #2e3236 48%, #000 52%, #101214)' : 'linear-gradient(#8b8f92, #585c5f 48%, #17191b 52%, #303336)')};
`;
const Tray = styled.div`
  align-self: stretch;
  display: flex;
  align-items: center;
  gap: 2px;
  padding-right: 13px;
`;
const TrayText = styled.span<{ $l?: number; $r?: number }>`
  margin: 0 ${p => p.$r ?? 0}px 0 ${p => p.$l ?? 0}px;
`;

const Flower = ({ s = 14 }: { s?: number }) => (
  <svg width={s} height={s} viewBox="0 0 14 14"><rect width="14" height="14" rx="2" fill="#f7f0f6" /><path d="M7 7L3 2l3 0 1 3 2-4 2 3-3 2 5 1-2 2-3-1 2 4-3 0-1-4-3 4-2-2 4-3-5-1 1-2z" fill="#d64a9a" /><path d="M7 7L5 4l2 1 2-2-1 3 3 1-3 1 1 3-2-2-2 2 1-3-3-1z" fill="#f07020" /></svg>
);

export default function App() {
  return (
    <>
      <Global />
      <Desktop>
        <TitleBar>
          <Flower />
          <AppTitle>Adobe InDesign CS2</AppTitle>
          <Caption>
            <CaptionButton aria-label="Minimieren"><svg width="12" height="12"><rect x="0" y="7" width="11" height="3" fill="#fff" /></svg></CaptionButton>
            <CaptionButton aria-label="Verkleinern"><svg width="12" height="11"><path d="M4 1h6.500v6.500H9M1.500 3.500H8V10H1.500zM4 6h1.500v1.500H4z" fill="none" stroke="#fff" strokeWidth="1.500" /></svg></CaptionButton>
            <CaptionButton $close aria-label="Schließen"><svg width="11" height="9"><path d="M1.500 0l8 9M9.500 0l-8 9" stroke="#fff" strokeWidth="2.600" /></svg></CaptionButton>
          </Caption>
        </TitleBar>
        <MenuBar>
          {['Datei', 'Bearbeiten', 'Layout', 'Schrift', 'Objekt', 'Tabelle', 'Ansicht', 'Fenster', 'Hilfe'].map(m => <MenuLink key={m}>{m}</MenuLink>)}
        </MenuBar>
        <ControlBar>
          <Grip />
          <Stack $w={20}><GlyphButton $on>A</GlyphButton><GlyphButton>¶</GlyphButton></Stack>
          <Divider />
          <Stack $w={152}><Combo label="Schriftart" value="Times New Roman" /><Combo label="Schriftschnitt" value="Regular" /></Stack>
          <Stack $w={16}>
            <Cell><svg width="16" height="14"><path d="M0 5h7v2H4.500v6h-2V7H0z" fill="#888" /><path d="M5 1h11v3h-1l-.5-1.500H11.800v10l1.200.5H8.500l1-.5v-10H6.500L6 4H5z" fill="#111" /></svg></Cell>
            <Cell><svg width="14" height="16" fill="none" stroke="#222"><path d="M4 7l2.500-6L9 7M5 5h3M2 9v6M0 10h4M0 14h4M6 15l3-7 3 7M7 13h4M5 15.500h8" /></svg></Cell>
          </Stack>
          <Stack $w={88}><Combo label="Schriftgrad" value="12 Pt" spin pad={4} /><Combo label="Zeilenabstand" value="(14,4 Pt)" spin pad={4} /></Stack>
          <Divider />
          <Stack><GlyphButton>TT</GlyphButton><GlyphButton>T<small>T</small></GlyphButton></Stack>
          <Stack><GlyphButton>T<sup>1</sup></GlyphButton><GlyphButton>T<sub>1</sub></GlyphButton></Stack>
          <Stack><GlyphButton><u>T</u></GlyphButton><GlyphButton><s>T</s></GlyphButton></Stack>
          <Divider />
          <Stack $w={18}>
            <Cell><svg width="16" height="15" fill="none" stroke="#222"><path d="M1 11l3-8 3 8M2 8h4M9 3l3 8 3-8M5 1h6M8 1l3 13M6 14h7" /></svg></Cell>
            <Cell><svg width="17" height="14" fill="none" stroke="#222"><path d="M0 0h17v9H0z" fill="#bbb" stroke="none" /><path d="M1 9l3-7 3 7M2 6.500h4M9 2l3 7 3-7M1 12h15M3 10v4M14 10v4" /></svg></Cell>
          </Stack>
          <Stack $w={75}><Combo label="Kerning" value="Metrisch" spin spinOff pad={4} /><Combo label="Laufweite" value="0" spin pad={4} /></Stack>
          <Divider />
          <Stack $w={19}>
            <Cell><svg width="16" height="14"><path d="M5 1h11v3.500h-1L14.500 3H12v9.500l1 .5H8.500l1-.5V3H6.500L6 4.500H5z" fill="#333" /><path d="M2 1v12M0 3l2-2 2 2M0 11l2 2 2-2" fill="none" stroke="#333" /></svg></Cell>
            <Cell><svg width="15" height="15" fill="none" stroke="#222"><path d="M0 11l3-7 3 7M1 9h4M0 13.500h8M9 2h3v4H9V4h3M8 8.500h6M11 9v6M9 11h4" /></svg></Cell>
          </Stack>
          <Stack $w={75}><Combo label="Vertikal skalieren" value="100%" spin pad={4} /><Spinner label="Grundlinienversatz" value="0 Pt" /></Stack>
          <Stack $w={19}>
            <Cell><svg width="17" height="15"><path d="M1 0h15v5h-1l-1-2h-3v7l2 1H5l1-1V3H3L2 5H1zM0 13h17v1.500H0z" fill="#222" /></svg></Cell>
            <Cell><svg width="16" height="14"><path d="M4 0h12l-1 4h-1V2h-3L8 12l2 1H4l2-1L9 2H6L4 4H3z" fill="#333" /></svg></Cell>
          </Stack>
          <Stack $w={75}><Combo label="Horizontal skalieren" value="100%" spin pad={4} /><Spinner label="Neigen" value="0°" /></Stack>
          <Divider />
          <Stack $w={14}>
            <Cell><svg width="13" height="13" fill="none" stroke="#333" strokeWidth="2"><path d="M1.500 12L7 1l4 11M4 8.500h6" /></svg></Cell>
            <Cell />
          </Stack>
          <Stack $w={138}><Combo label="Zeichenformat" value="[Keine]" muted pad={4} /><Combo label="Sprache" value="Deutsch: Neue Rechtschr." muted pad={4} /></Stack>
          <Stack $w={16}>
            <Cell><svg width="16" height="14" fill="none" stroke="#555"><path d="M0 2.500h2M3 2.500h5M0 5.500h2M3 5.500h6M0 8.500h2M3 8.500h10M0 11.500h2M3 11.500h10" /><circle cx="11.500" cy="4" r="3" fill="#ddd" /><path d="M13 6l3 3" strokeWidth="1.500" /></svg></Cell>
            <Cell />
          </Stack>
          <Divider />
          <svg width="23" height="20" fill="none" stroke="#333"><path d="M1.500 18.500v-14l2-2h5l2 2h7.500v14z" fill="#f8f8f8" /><path d="M4 7l8 8M12 7l-7 8M6 6l3 8M4 11l8-1" stroke="#555" /><circle cx="16" cy="5" r="3" fill="#ddd" /><path d="M18 7l4 3" strokeWidth="2" /></svg>
          <Divider />
          <Stack $w={18}>
            <Cell><svg width="9" height="7" fill="none" stroke="#444" strokeWidth="1.500"><path d="M1 .5l3 3-3 3M5 .5l3 3-3 3" /></svg></Cell>
            <Cell><svg width="14" height="14" fill="none" stroke="#111"><path d="M.8 13.200V1.500h5l1 2h6.500v9.700z" fill="#ccc" strokeWidth="1.500" /><path d="M3 6.500h1M6 6.500h6M3 8.500h1M6 8.500h6M3 10.500h1M6 10.500h6" /></svg></Cell>
          </Stack>
          <Spacer $w={44} />
          <Divider $full />
        </ControlBar>
        <Workspace>
          <Toolbox />
          <BookPalette />
          <RightDock />
          <Corner />
        </Workspace>
        <Taskbar>
          <Start aria-label="Start">
            <svg width="33" height="30" viewBox="0 0 33 30">
              <defs><radialGradient id="orb" cx=".5" cy=".9" r=".9"><stop offset="0" stopColor="#5cd2f4" /><stop offset=".5" stopColor="#2a6f9c" /><stop offset="1" stopColor="#8fb4c6" /></radialGradient></defs>
              <circle cx="16.500" cy="14.500" r="15" fill="url(#orb)" stroke="#12303f" />
              <path d="M8 8c3-2 5-2 7-.5L13.500 14c-2-1.500-4-1.500-7 0z" fill="#e8562c" /><path d="M16.500 8c3 1.500 5 1.500 8 0L23 14.500c-3 1.500-5 1.500-8 0z" fill="#8cc63c" />
              <path d="M6 15.500c3-1.500 5-1.500 7 0L11.500 22c-2-1.500-4-1.500-7-.5z" fill="#4a9be0" /><path d="M14.500 16c3 1.500 5 1.500 8 0L21 22.500c-3 1.500-5 1.500-8 0z" fill="#f8cc3c" />
            </svg>
          </Start>
          <Quick>
            <svg width="16" height="15"><path d="M.5 1.500h15v12H.5z" fill="#5a8fd8" stroke="#b8d0ee" /><path d="M1 11h14v2.500H1z" fill="#dfe8f2" /></svg>
            <svg width="16" height="15"><path d="M.5.500h15v14H.5z" fill="#1e4f96" stroke="#7fb0e4" /><path d="M3 3h5v4H3zM5 6h5v4H5zM8 9h5v3H8z" fill="#1e4f96" stroke="#fff" /></svg>
            <svg width="16" height="15"><rect width="16" height="15" rx="2" fill="#43b6e8" /><rect x="2" y="2" width="12" height="11" fill="#f08a1c" /><path d="M5 3.500l7 4-7 4z" fill="#fff" /></svg>
          </Quick>
          <Spacer $w={17} />
          <Chevron aria-label="Weitere Symbole">»</Chevron>
          <Tasks>
            <Task>
              <svg width="15" height="15"><circle cx="7.500" cy="7.500" r="6.500" fill="#2b5fb0" /><path d="M2 2c0 3-1 5 1 6 2-1 4-1 4 1s3 3 5 1c2-3 1-6 0-8 4 4 3 12-4.500 12.500C0 14-1 7 2 2z" fill="#f08a20" /></svg>
              InDesign CS2 Absch...
            </Task>
            <Task $on><Flower s={15} />Adobe InDesign CS2</Task>
            <Task>
              <svg width="15" height="16"><path d="M1 2l6-2v14l-6 1z" fill="#f2dc8c" /><path d="M6 3h6v11H6z" fill="#e0bf5c" /><path d="M10 13c3-3 3-5 2-7l-3 1 3-5 3 4-2 0c1 3 0 6-3 7z" fill="#4cc04c" /></svg>
              Dokumente
            </Task>
          </Tasks>
          <Tray>
            <TrayText $r={13}>DE</TrayText>
            <TrayText $r={6}>Desktop</TrayText>
            <Chevron aria-label="Symbolleiste erweitern">»</Chevron>
            <Spacer $w={6} />
            <svg width="8" height="10"><path d="M7 1L2 5l5 4" fill="none" stroke="#fff" strokeWidth="1.800" /></svg>
            <Spacer $w={3} />
            <svg width="16" height="16"><rect width="16" height="16" fill="#000" /><circle cx="11" cy="5" r="3.500" fill="none" stroke="#fff" strokeWidth="1.500" /><path d="M0 9l5 2 5-4" stroke="#fff" strokeWidth="2" fill="none" /><circle cx="5" cy="12" r="2.500" fill="#fff" /></svg>
            <svg width="16" height="16" fill="none" stroke="#5f9c8c" strokeWidth="1.500"><path d="M3 2c2 4 2 8-1 12" /><ellipse cx="11" cy="8" rx="3.500" ry="5" /><path d="M9 5l4 6" /></svg>
            <svg width="16" height="16"><path d="M1 1h4v10h7V3h3v12H1z" fill="#d8c060" /><path d="M5 4h7v6H5z" fill="#fff2c0" /></svg>
            <svg width="16" height="16"><rect width="16" height="16" fill="#cc1420" /><path d="M3 10c0-5 5-8 9-6l-6 8-3-2zM7 9l6 4" fill="none" stroke="#fff" strokeWidth="1.500" /></svg>
            <svg width="16" height="16"><rect width="16" height="8" fill="#28b428" /><rect y="8" width="16" height="8" fill="#1428c8" /><text x="0" y="7" fontSize="7" fontWeight="700" fill="#1428c8" fontFamily="Liberation Sans, sans-serif">Xear</text><text x="2" y="15" fontSize="8" fontWeight="700" fill="#fff" fontFamily="Liberation Sans, sans-serif">3D</text></svg>
            <Spacer $w={8} />
            <svg width="16" height="15"><path d="M5.500.5h9v8h-9z" fill="#3f8fe0" stroke="#dfe" /><path d="M1.500 4.500h9v7h-9z" fill="#2a6cc0" stroke="#dfe" /><circle cx="11.500" cy="11" r="3.500" fill="#3aa060" /></svg>
            <svg width="16" height="14"><path d="M1 5h3l4-4v12L4 9H1z" fill="#fff" /><path d="M10 4q2 3 0 6M12.500 2.500q3 4.500 0 9" fill="none" stroke="#fff" /></svg>
            <TrayText $l={3}>15:37</TrayText>
          </Tray>
        </Taskbar>
      </Desktop>
    </>
  );
}
